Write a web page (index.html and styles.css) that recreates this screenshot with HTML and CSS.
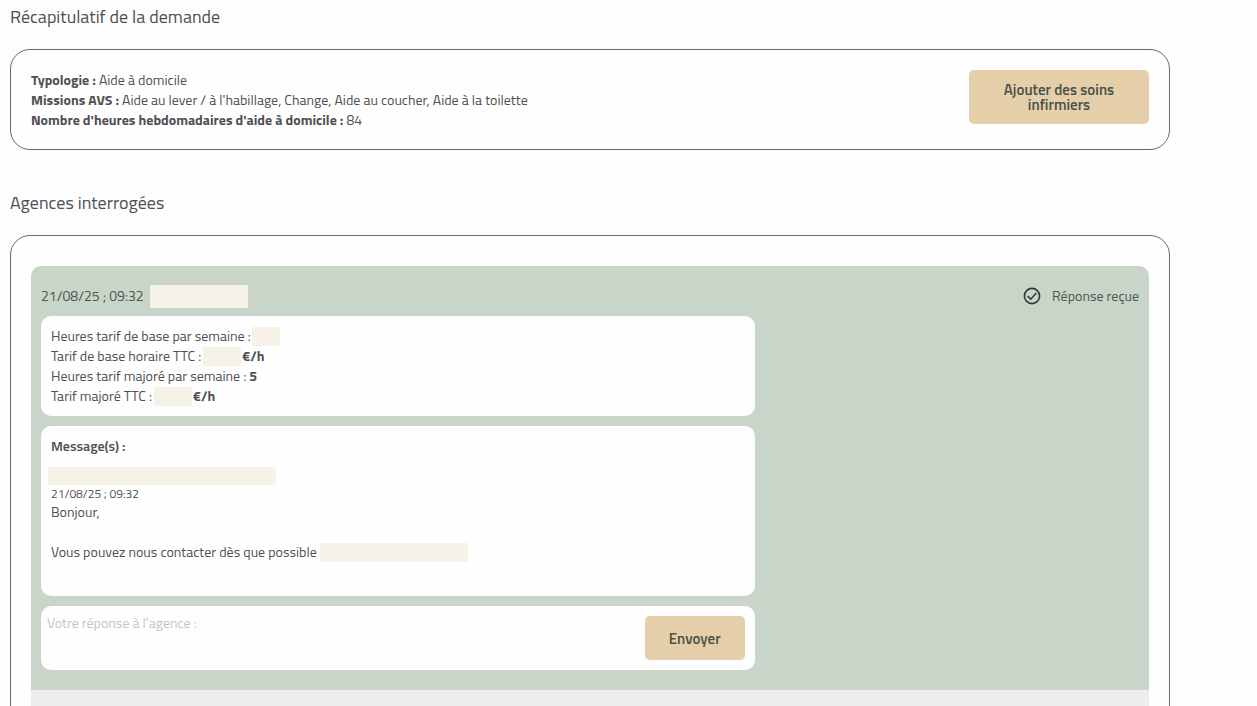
FILE: index.html
```
<!DOCTYPE html>
<html lang="fr">
<head>
    <meta charset="UTF-8">
    <meta name="viewport" content="width=device-width, initial-scale=1">
    <title>Récapitulatif de la demande</title>
    <link rel="stylesheet" href="styles.css">
</head>
<body>
    <main class="container">
        <h2>Récapitulatif de la demande</h2>
        <section class="box summary">
            <div class="summary-text">
                <p><b>Typologie :</b> Aide à domicile</p>
                <p><b>Missions AVS :</b> Aide au lever / à l'habillage, Change, Aide au coucher, Aide à la toilette</p>
                <p><b>Nombre d'heures hebdomadaires d'aide à domicile :</b> 84</p>
            </div>
            <button type="button" class="btn btn-care">Ajouter des soins infirmiers</button>
        </section>

        <h2>Agences interrogées</h2>
        <section class="box agencies">
            <article class="agency">
                <header class="agency-header">
                    <span class="agency-date">21/08/25 ; 09:32</span>
                    <span class="mask mask-agency"></span>
                    <span class="status">
                        <svg class="status-icon" viewBox="0 0 18 18" aria-hidden="true">
                            <circle cx="9" cy="9" r="7.6"/>
                            <path d="M4.6 9.2 7.8 12.2 13.3 6"/>
                        </svg>
                        Réponse reçue
                    </span>
                </header>

                <div class="card rates">
                    <p>Heures tarif de base par semaine :<span class="mask mask-hours"></span></p>
                    <p>Tarif de base horaire TTC :<span class="mask mask-rate"></span><b>€/h</b></p>
                    <p>Heures tarif majoré par semaine : <b>5</b></p>
                    <p>Tarif majoré TTC :<span class="mask mask-rate"></span><b>€/h</b></p>
                </div>

                <div class="card messages">
                    <h3>Message(s) :</h3>
                    <span class="mask mask-sender"></span>
                    <p class="message-date">21/08/25 ; 09:32</p>
                    <p>Bonjour,</p>
                    <br>
                    <p>Vous pouvez nous contacter dès que possible<span class="mask mask-contact"></span></p>
                </div>

                <form class="card reply">
                    <textarea class="reply-text" aria-label="Votre réponse à l'agence" placeholder="Votre réponse à l'agence :"></textarea>
                    <button type="button" class="btn btn-send">Envoyer</button>
                </form>
            </article>
            <article class="agency-next"></article>
        </section>
    </main>
</body>
</html>
```
FILE: styles.css
```
* {
    box-sizing: border-box;
}

body {
    margin: 0;
    height: 100vh;
    overflow: hidden;
    background-color: #fdfdfd;
    color: #504f53;
    font-family: "Titillium Web", Roboto, sans-serif;
    font-size: 14px;
    font-weight: 400;
    line-height: 20px;
}

h2, h3, p {
    margin: 0;
}

b {
    font-weight: 700;
}

.container {
    max-width: 1180px;
    padding: 2px 10px;
}

h2 {
    font-size: 18px;
    font-weight: 400;
    line-height: 30px;
    margin-bottom: 17px;
}

.box {
    border: 1px solid #69696b;
    border-radius: 20px;
    padding: 20px;
    background-color: #fefefe;
}

.summary {
    display: flex;
    justify-content: space-between;
    align-items: flex-start;
    gap: 20px;
    padding-bottom: 19px;
    margin-bottom: 38px;
}

.btn {
    border: none;
    border-radius: 5px;
    background-color: #e4cfaa;
    color: #4b5148;
    font-family: inherit;
    font-size: 15px;
    font-weight: 600;
    line-height: 15px;
    cursor: pointer;
}

.btn-care {
    width: 180px;
    height: 54px;
    padding: 0 30px;
}

.agencies {
    padding-top: 30px;
}

.agency {
    display: flex;
    flex-direction: column;
    gap: 10px;
    padding: 20px 10px;
    border-radius: 10px 10px 0 0;
    background-color: #c8d5c8;
}

.agency-next {
    height: 200px;
    background-color: #efedf0;
}

.agency-header {
    display: flex;
    align-items: center;
    height: 20px;
    color: #4d574e;
}

.status {
    display: flex;
    align-items: center;
    gap: 11px;
    margin-left: auto;
}

.status-icon {
    width: 18px;
    height: 18px;
    fill: none;
    stroke: #2f3a32;
    stroke-width: 1.6;
}

.card {
    width: 65%;
    padding: 10px;
    border-radius: 10px;
    background-color: #fefefe;
}

.mask {
    display: inline-block;
    height: 19px;
    margin-top: 1px;
    border-radius: 1px;
    background-color: #f7f2e8;
    vertical-align: top;
}

.mask-agency {
    width: 98px;
    height: 23px;
    margin-left: 6px;
}

.mask-hours {
    width: 28px;
    margin-left: 1px;
}

.mask-rate {
    width: 38px;
    margin-left: 2px;
    margin-right: 1px;
}

.mask-sender {
    display: block;
    width: 228px;
    height: 18px;
    margin: 11px 0 0 -3px;
}

.mask-contact {
    width: 148px;
    margin-left: 3px;
}

.messages {
    min-height: 170px;
}

h3 {
    font-size: 14px;
    font-weight: 600;
    line-height: 20px;
}

.message-date {
    font-size: 12px;
    line-height: 17px;
}

.reply {
    display: flex;
    padding-left: 6px;
}

.reply-text {
    flex: 1;
    height: 44px;
    padding: 0;
    border: none;
    outline: none;
    resize: none;
    background: transparent;
    color: inherit;
    font: inherit;
    line-height: 14px;
}

.reply-text::placeholder {
    color: #c6c4c8;
}

.btn-send {
    width: 100px;
    height: 44px;
}
```
